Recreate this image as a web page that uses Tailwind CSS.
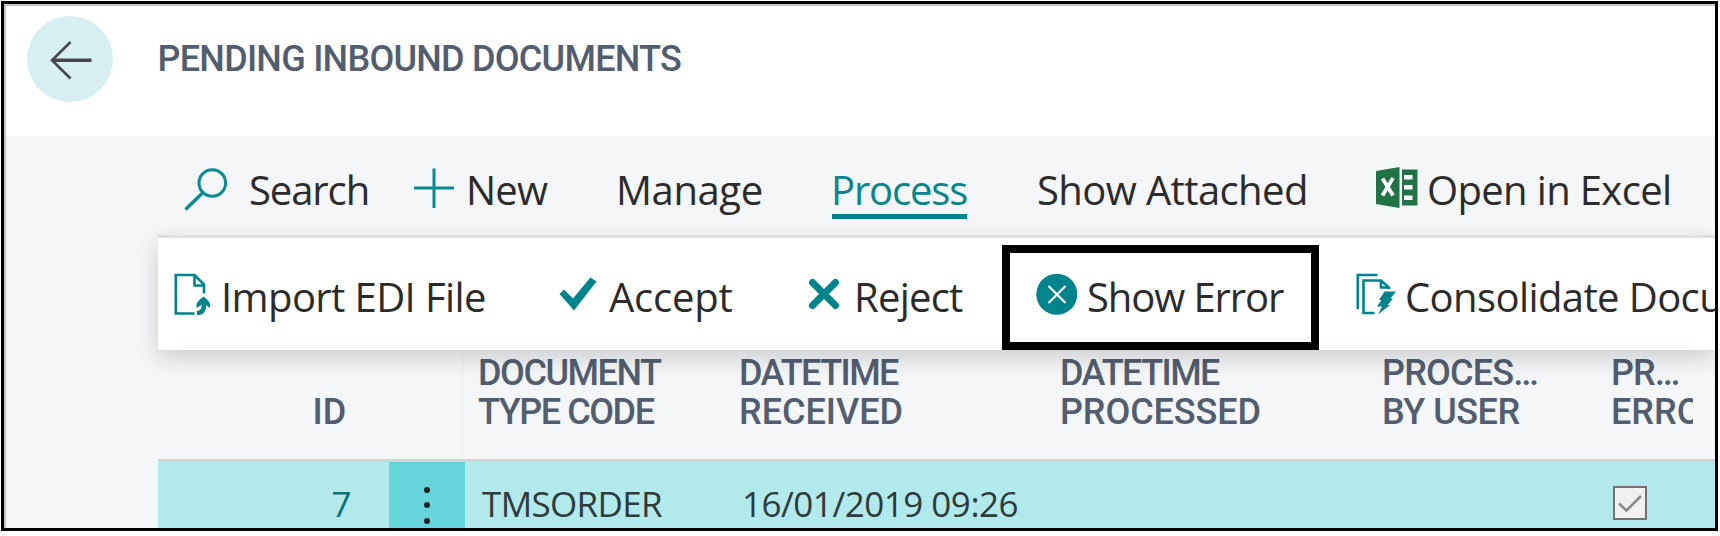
<!DOCTYPE html>
<html lang="en">
<head>
<meta charset="utf-8">
<title>Pending Inbound Documents</title>
<script src="https://cdn.jsdelivr.net/npm/@tailwindcss/browser@4"></script>
</head>
<body class="h-[536px] overflow-hidden bg-white pt-px pl-px">
<div class="h-[530px] w-[1717px] overflow-hidden border-[3px] border-black">
<div class="flex h-full flex-col overflow-hidden border-t-2 border-l-2 border-[#c6c6c6] bg-[#f5f6f8] font-['Open_Sans',sans-serif] text-[#2b2b2b]">

  <!-- Page header -->
  <header class="flex h-[130px] shrink-0 items-start bg-white pl-[20.5px] pt-[9.5px]">
    <button class="size-[86px] shrink-0 rounded-full bg-[#d8eff2]">
      <svg class="size-[86px]" viewBox="0 0 86 86" fill="none" stroke="#44484b" stroke-width="3.400"><path d="M64.500 44.200H25"/><path d="M43.500 26 25 44.200 43.500 62.500" stroke-width="2.600"/></svg>
    </button>
    <h1 class="ml-[45px] mt-[24.500px] whitespace-nowrap font-[Roboto] text-[36px]/[39px] font-medium tracking-[-0.74px] text-[#525e70]">PENDING INBOUND DOCUMENTS</h1>
  </header>

  <!-- Tabs -->
  <nav class="flex h-[99px] shrink-0 items-start whitespace-nowrap pl-[178px] pt-[31px] text-[40px]/[40px]">
    <a class="flex w-[229px] shrink-0">
      <svg class="mr-[21px] h-[44px] w-[44px] shrink-0" viewBox="0 0 44 44" fill="none" stroke="#0a8a92" stroke-width="3"><circle cx="28.300" cy="16" r="13.300"/><path d="M19 25.500 1.500 42.500" stroke-width="3.500"/></svg>
      <span class="mt-[3px] tracking-[-1.1px]">Search</span>
    </a>
    <a class="flex w-[202px] shrink-0">
      <svg class="mr-[12px] h-[44px] w-[41px] shrink-0" viewBox="0 0 41 44" fill="none" stroke="#0a8a92" stroke-width="3"><path d="M1 21H41M21 1.500V41"/></svg>
      <span class="mt-[3px] tracking-[-0.8px]">New</span>
    </a>
    <a class="mt-[3px] w-[217px] shrink-0 pl-px tracking-[-0.4px]">Manage</a>
    <a class="mt-[3px] w-[204px] shrink-0 text-[#0a858c]"><span class="block h-[49px] w-[135px] border-b-[5px] border-[#00828a] tracking-[-1.15px]"><span class="-ml-px">Process</span></span></a>
    <a class="mt-[3px] w-[340px] shrink-0 pl-px tracking-[-0.6px]">Show Attached</a>
    <a class="flex shrink-0">
      <svg class="mr-[9px] h-[42px] w-[42px] shrink-0" viewBox="0 0 42 42"><path fill="#217346" d="M0 4 23.500 0V41L0 37Z M26 2.500H41.500V38.500H26Z"/><path fill="#fff" d="M28 8h8.500v4.500H28z M28 18h8.500v4.500H28z M28 28.500h8.500V33H28z"/><path d="M6.500 11.500 17 28.500M17 11 6.500 28.500" stroke="#fff" stroke-width="3.800"/></svg>
      <span class="mt-[3px] tracking-[-0.65px]">Open in Excel</span>
    </a>
  </nav>

  <!-- Process actions -->
  <div class="relative z-10 ml-[151.5px] flex h-[115px] shrink-0 items-start whitespace-nowrap border-t-[3px] border-[#dee0e3] bg-white pl-[16.5px] pt-[35px] text-[40px]/[40px] shadow-[0_8px_22px_rgba(0,0,0,0.17)]">
    <a class="flex w-[385px] shrink-0">
      <svg class="mr-[11px] h-[42px] w-[36px] shrink-0" viewBox="0 0 36 42" fill="none" stroke="#00838b" stroke-width="2.600"><path d="M20.500 40.500H1.800V2H20.500L30 11.500V20.500"/><path d="M20.500 3V12.500H30"/><path d="M30 28V32Q30 40 23 40" stroke-width="4.500"/><path d="M22.500 35V31Q23.500 28 29.500 23.500 35.500 28 36 31V35L30 30.500Z" fill="#00838b" stroke="none"/></svg>
      <span class="mt-[4px] tracking-[-0.6px]">Import EDI File</span>
    </a>
    <a class="flex w-[249px] shrink-0">
      <svg class="mr-[12px] h-[42px] w-[38px] shrink-0" viewBox="0 0 38 42"><path d="M0.500 20 5 15.500 14 24.500 31.500 3.500 37.500 7.500 15 36.500Z" fill="#00838b" transform="translate(0 1)"/></svg>
      <span class="mt-[4px] tracking-[-0.2px]">Accept</span>
    </a>
    <a class="flex w-[228px] shrink-0">
      <svg class="mr-[14px] h-[42px] w-[32px] shrink-0" viewBox="0 0 32 42"><path d="M4.500 9.500 27.500 32.500M27.500 9.500 4.500 32.500" stroke="#00838b" stroke-width="7" stroke-linecap="round"/></svg>
      <span class="mt-[4px] tracking-[-0.75px]">Reject</span>
    </a>
    <a class="flex w-[320px] shrink-0">
      <svg class="mr-[9px] h-[42px] w-[42px] shrink-0" viewBox="0 0 42 42"><circle cx="20.800" cy="21.300" r="20.500" fill="#00838b"/><path d="M12.500 13 29.500 30M29.500 13 12.500 30" stroke="#fff" stroke-width="2.200"/></svg>
      <span class="mt-[4px] tracking-[-1.1px]">Show Error</span>
    </a>
    <a class="flex shrink-0">
      <svg class="mr-[9px] h-[42px] w-[40px] shrink-0" viewBox="0 0 40 42" fill="none" stroke="#00838b" stroke-width="2.600"><path d="M21.500 2H1.800V36"/><path d="M18.500 40H7.500V7.500H25L33 14.500V16M25 8V14.500H33"/><path d="M28.500 18.500H40L34.500 25.500H37L31.500 32H34L22 41.500 26 33.500H21L25.500 27H23Z" fill="#00838b" stroke="none"/></svg>
      <span class="mt-[4px] tracking-[-0.6px]">Consolidate Documents</span>
    </a>
    <!-- Highlight around Show Error -->
    <div class="absolute left-[844.5px] top-[7px] h-[105px] w-[317px] border-[8.5px] border-black"></div>
  </div>

  <!-- Column headings -->
  <div class="ml-[151.5px] flex h-[112px] shrink-0 items-start whitespace-nowrap border-b-[3px] border-[#cfd4d6] pt-[4px] font-[Roboto] text-[36px]/[39px] font-medium text-[#525e70]">
    <div class="h-[105px] w-[306.5px] shrink-0 border-r-[3px] border-[#f2f2f3] pl-[155px] pt-[39px]">ID</div>
    <div class="w-[275px] shrink-0 pl-[14px] tracking-[-1.45px]">DOCUMENT<br>TYPE CODE</div>
    <div class="w-[321px] shrink-0"><span class="tracking-[-1.57px]">DATETIME</span><br>RECEIVED</div>
    <div class="w-[322px] shrink-0"><span class="tracking-[-1.57px]">DATETIME</span><br><span class="tracking-[-0.1px]">PROCESSED</span></div>
    <div class="w-[229px] shrink-0"><span class="tracking-[-0.8px]">PROCES…</span><br><span class="tracking-[-0.5px]">BY USER</span></div>
    <div class="w-[82px] shrink-0 overflow-hidden"><span class="tracking-[-0.9px]">PR…</span><br>ERROR</div>
  </div>

  <!-- Selected row -->
  <div class="ml-[151.5px] flex h-[66px] shrink-0 items-start whitespace-nowrap bg-[#b2eaec] text-[35px]/[40px] text-[#2e3a3b]">
    <div class="w-[231px] shrink-0 pr-[37px] pt-[22px] text-right text-[#0d7077]">7</div>
    <div class="flex h-[66px] w-[76.5px] shrink-0 flex-col items-center gap-[9.300px] bg-[#66d5db] pt-[25px]">
      <i class="size-[6px] shrink-0 rounded-full bg-[#222]"></i><i class="size-[6px] shrink-0 rounded-full bg-[#222]"></i><i class="size-[6px] shrink-0 rounded-full bg-[#222]"></i>
    </div>
    <div class="w-[277px] shrink-0 pl-[17px] pt-[22px] tracking-[-0.65px]">TMSORDER</div>
    <div class="w-[871px] shrink-0 pt-[22px] tracking-[-0.5px]">16/01/2019 09:26</div>
    <div class="mt-[24px] size-[34px] shrink-0 border-[2.500px] border-[#757171] bg-[#f0f0f0]">
      <svg class="block size-[30px]" viewBox="0 0 30 30" fill="none" stroke="#8b8b8b" stroke-width="2.600"><path d="M4 15.500 11.500 22.500 26 8"/></svg>
    </div>
  </div>
</div>
</div>
</body>
</html>
